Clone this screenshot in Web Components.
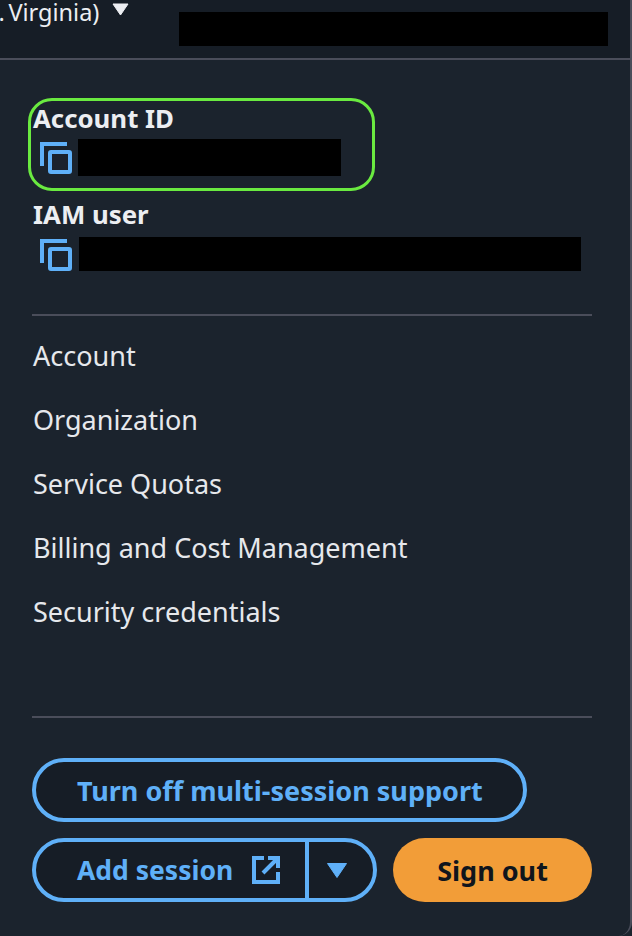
<!DOCTYPE html>
<html>
<head>
<meta charset="utf-8">
<style>
  html, body { margin: 0; padding: 0; background: #1b232d; }
  body { font-family: "Noto Sans", "Open Sans", sans-serif; }
</style>
</head>
<body>
<console-panel>
  <top-bar></top-bar>
  <account-field label="Account ID" focused redact="263"></account-field>
  <account-field label="IAM user" redact="502"></account-field>
  <panel-rule style="margin-top:41px"></panel-rule>
  <nav-list style="margin-top:8px">
    <nav-link>Account</nav-link>
    <nav-link>Organization</nav-link>
    <nav-link>Service Quotas</nav-link>
    <nav-link>Billing and Cost Management</nav-link>
    <nav-link>Security credentials</nav-link>
  </nav-list>
  <panel-rule style="margin-top:72px"></panel-rule>
  <session-actions></session-actions>
</console-panel>

<script>
class ConsolePanel extends HTMLElement {
  constructor() {
    super();
    this.attachShadow({ mode: 'open' }).innerHTML = `
      <style>
        :host {
          display: block;
          box-sizing: border-box;
          width: 632px;
          height: 936px;
          overflow: hidden;
          background: #1b232d;
          color: #eceef2;
          border-right: 2px solid #4a4d5a;
          border-bottom-right-radius: 14px;
        }
      </style>
      <slot></slot>`;
  }
}

class TopBar extends HTMLElement {
  constructor() {
    super();
    this.attachShadow({ mode: 'open' }).innerHTML = `
      <style>
        :host {
          display: flex;
          box-sizing: border-box;
          height: 60px;
          background: #161d26;
          border-bottom: 2px solid #4a4d5a;
          overflow: hidden;
        }
        .region {
          display: flex;
          align-items: flex-start;
          width: 179px;
          flex: none;
          font-size: 23.5px;
          line-height: 24px;
          word-spacing: -2.5px;
          margin-left: -1.5px;
          white-space: nowrap;
        }
        svg { margin: 3px 0 0 13px; flex: none; }
        .redact { width: 429px; height: 34px; margin: 12px 0 0 1.5px; background: #000; }
      </style>
      <div class="region">
        <span>. Virginia)</span>
        <svg width="17" height="13" viewBox="0 0 17 13"><path d="M1 1h15L8.5 12z" fill="#eceef2" stroke="#eceef2" stroke-linejoin="round"/></svg>
      </div>
      <div class="redact"></div>`;
  }
}

class AccountField extends HTMLElement {
  constructor() {
    super();
    const focused = this.hasAttribute('focused');
    this.attachShadow({ mode: 'open' }).innerHTML = `
      <style>
        :host {
          display: block;
          box-sizing: border-box;
          margin: ${focused ? '38px 0 0 28px' : '0 0 0 28px'};
          width: ${focused ? '347px' : '560px'};
          height: ${focused ? '93px' : '82px'};
          padding: ${focused ? '1px 0 0 2px' : '7px 0 0 5px'};
          border: ${focused ? '3px solid #6aea40' : '0'};
          border-radius: 24px;
        }
        .label {
          font-size: 25.8px;
          font-weight: 700;
          line-height: 33px;
        }
        .row { display: flex; align-items: center; gap: ${focused ? '5px' : '6px'}; padding-left: 7px; margin-top: ${focused ? '4px' : '6px'}; }
        .redact { width: ${this.getAttribute('redact')}px; height: ${focused ? 37 : 34}px; background: #000; }
      </style>
      <div class="label">${this.getAttribute('label')}</div>
      <div class="row">
        <svg width="33" height="33" viewBox="0 0 33 33" fill="none" stroke="#5fb0f8" stroke-width="4">
          <path d="M27 3H2v22"/>
          <rect x="10" y="11" width="20" height="20" rx="1"/>
        </svg>
        <div class="redact"></div>
      </div>`;
  }
}

class PanelRule extends HTMLElement {
  constructor() {
    super();
    this.attachShadow({ mode: 'open' }).innerHTML = `
      <style>
        :host { display: block; height: 2px; width: 560px; margin-left: 32px; background: #4a4d5a; }
      </style>`;
  }
}

class NavList extends HTMLElement {
  constructor() {
    super();
    this.attachShadow({ mode: 'open' }).innerHTML = `
      <style>
        :host { display: flex; flex-direction: column; padding-left: 33px; }
      </style>
      <slot></slot>`;
  }
}

class NavLink extends HTMLElement {
  constructor() {
    super();
    this.attachShadow({ mode: 'open' }).innerHTML = `
      <style>
        :host { display: block; height: 64px; line-height: 64px; font-size: 27px; color: #e6e8ec; }
      </style>
      <slot></slot>`;
  }
}

class SessionActions extends HTMLElement {
  constructor() {
    super();
    this.attachShadow({ mode: 'open' }).innerHTML = `
      <style>
        :host { display: flex; flex-direction: column; gap: 16px; margin: 40px 0 0 32px; width: 560px; }
        .btn {
          box-sizing: border-box;
          height: 64px;
          border: 4px solid #5fb0f8;
          border-radius: 32px;
          background: #161d26;
          color: #5fb0f8;
          font-size: 27px;
          font-weight: 700;
          display: flex;
          align-items: center;
        }
        .wide { width: 495px; padding-left: 41px; }
        .row { display: flex; gap: 16px; }
        .split { width: 345px; }
        .main { display: flex; align-items: center; width: 273px; height: 100%; padding-left: 41px; box-sizing: border-box; border-right: 4px solid #5fb0f8; }
        .main span { font-size: 26.5px; }
        .main svg { margin-left: 18px; }
        .caret { flex: 1; display: flex; justify-content: center; padding-right: 9px; }
        .primary {
          width: 199px;
          height: 64px;
          border-radius: 32px;
          background: #f29d38;
          color: #10151c;
          font-size: 27px;
          font-weight: 700;
          display: flex;
          align-items: center;
          justify-content: center;
        }
      </style>
      <div class="btn wide">Turn off multi-session support</div>
      <div class="row">
        <div class="btn split">
          <div class="main">
            <span>Add session</span>
            <svg width="30" height="30" viewBox="0 0 30 30" fill="none" stroke="#5fb0f8" stroke-width="4">
              <path d="M13 3H3v24h24V17"/>
              <path d="M12 18 26 4"/>
              <path d="M17 3h10v10"/>
            </svg>
          </div>
          <div class="caret">
            <svg width="22" height="17" viewBox="0 0 22 17"><path d="M1.5 1.5h19L11 15.5z" fill="#5fb0f8" stroke="#5fb0f8" stroke-linejoin="round"/></svg>
          </div>
        </div>
        <div class="primary">Sign out</div>
      </div>`;
  }
}

customElements.define('console-panel', ConsolePanel);
customElements.define('top-bar', TopBar);
customElements.define('account-field', AccountField);
customElements.define('panel-rule', PanelRule);
customElements.define('nav-list', NavList);
customElements.define('nav-link', NavLink);
customElements.define('session-actions', SessionActions);
</script>
</body>
</html>
